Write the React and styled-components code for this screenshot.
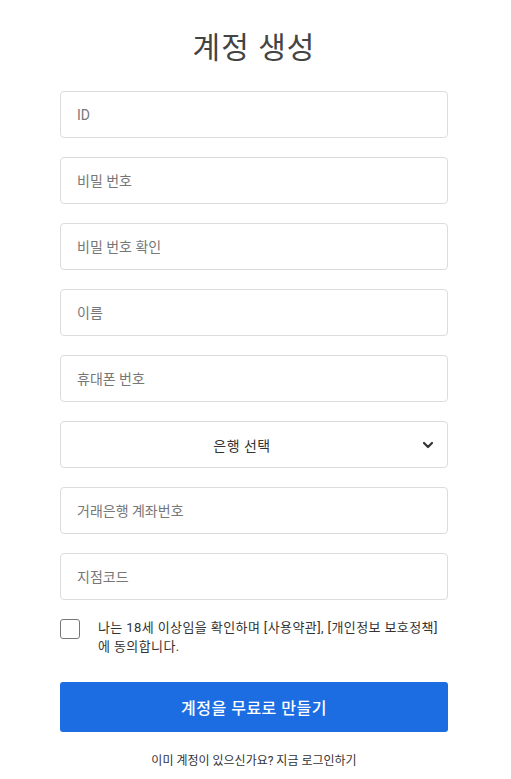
import styled, { createGlobalStyle } from "styled-components"

const GlobalStyle = createGlobalStyle`
    body {
        margin: 0;
        background: #fff;
        font-family: Roboto, "Noto Sans CJK KR", sans-serif;
    }
`

const fields = ['ID', '비밀 번호', '비밀 번호 확인', '이름', '휴대폰 번호']
const fields2 = ['거래은행 계좌번호', '지점코드']

const ChevronDown = () => (
    <svg width="12" height="12" viewBox="0 0 12 12">
        <path d="M2 4 L6 8 L10 4" fill="none" stroke="#333" strokeWidth="2.2" strokeLinecap="round" strokeLinejoin="round" />
    </svg>
)

export default function App() {
    return (
        <>
            <GlobalStyle />
            <Wrapper>
                <Title>계정 생성</Title>
                <Form>
                    {fields.map((f) => (
                        <Input key={f} placeholder={f} />
                    ))}
                    <Select>
                        <span>은행 선택</span>
                        <Arrow><ChevronDown /></Arrow>
                    </Select>
                    {fields2.map((f) => (
                        <Input key={f} placeholder={f} />
                    ))}
                    <AgreeRow>
                        <CheckBox />
                        <AgreeText>나는 18세 이상임을 확인하며 [사용약관], [개인정보 보호정책]에 동의합니다.</AgreeText>
                    </AgreeRow>
                    <SubmitButton>계정을 무료로 만들기</SubmitButton>
                    <LoginText>이미 계정이 있으신가요? 지금 로그인하기</LoginText>
                </Form>
            </Wrapper>
        </>
    )
}

const Wrapper = styled.div`
    width: 388px;
    margin-left: 60px;
    padding-top: 28px;
    display: flex;
    flex-direction: column;
    align-items: center;
`

const Title = styled.h1`
    margin: 0;
    font-size: 30px;
    font-weight: 400;
    color: #444;
    line-height: 40px;
    letter-spacing: 1px;
`

const Form = styled.div`
    width: 100%;
    margin-top: 23px;
    display: flex;
    flex-direction: column;
    gap: 19px;
`

const Input = styled.input`
    box-sizing: border-box;
    width: 100%;
    height: 47px;
    border: 1px solid #dcdcdc;
    border-radius: 4px;
    padding: 0 16px;
    font-family: Roboto, "Noto Sans CJK KR", sans-serif;
    font-size: 14px;
    color: #333;
    outline: none;
    &::placeholder {
        color: #777;
    }
`

const Select = styled.div`
    box-sizing: border-box;
    position: relative;
    width: 100%;
    height: 47px;
    padding-right: 24px;
    border: 1px solid #dcdcdc;
    border-radius: 4px;
    display: flex;
    align-items: center;
    justify-content: center;
    font-size: 14px;
    color: #333;
    letter-spacing: 0.5px;
`

const Arrow = styled.span`
    position: absolute;
    right: 13px;
    top: 17px;
    display: flex;
`

const AgreeRow = styled.div`
    display: flex;
    align-items: flex-start;
    gap: 18px;
`

const CheckBox = styled.div`
    box-sizing: border-box;
    flex: none;
    width: 20px;
    height: 20px;
    border: 1.5px solid #777;
    border-radius: 3px;
`

const AgreeText = styled.div`
    font-size: 13px;
    line-height: 19px;
    color: #333;
    letter-spacing: 0.4px;
    margin-top: -1px;
`

const SubmitButton = styled.button`
    height: 50px;
    margin-top: 7px;
    border: none;
    border-radius: 3px;
    background: #1d6de2;
    color: #fff;
    font-family: Roboto, "Noto Sans CJK KR", sans-serif;
    font-size: 16px;
    font-weight: 500;
    letter-spacing: 0.5px;
`

const LoginText = styled.div`
    margin-top: 0;
    text-align: center;
    font-size: 12px;
    color: #333;
`
